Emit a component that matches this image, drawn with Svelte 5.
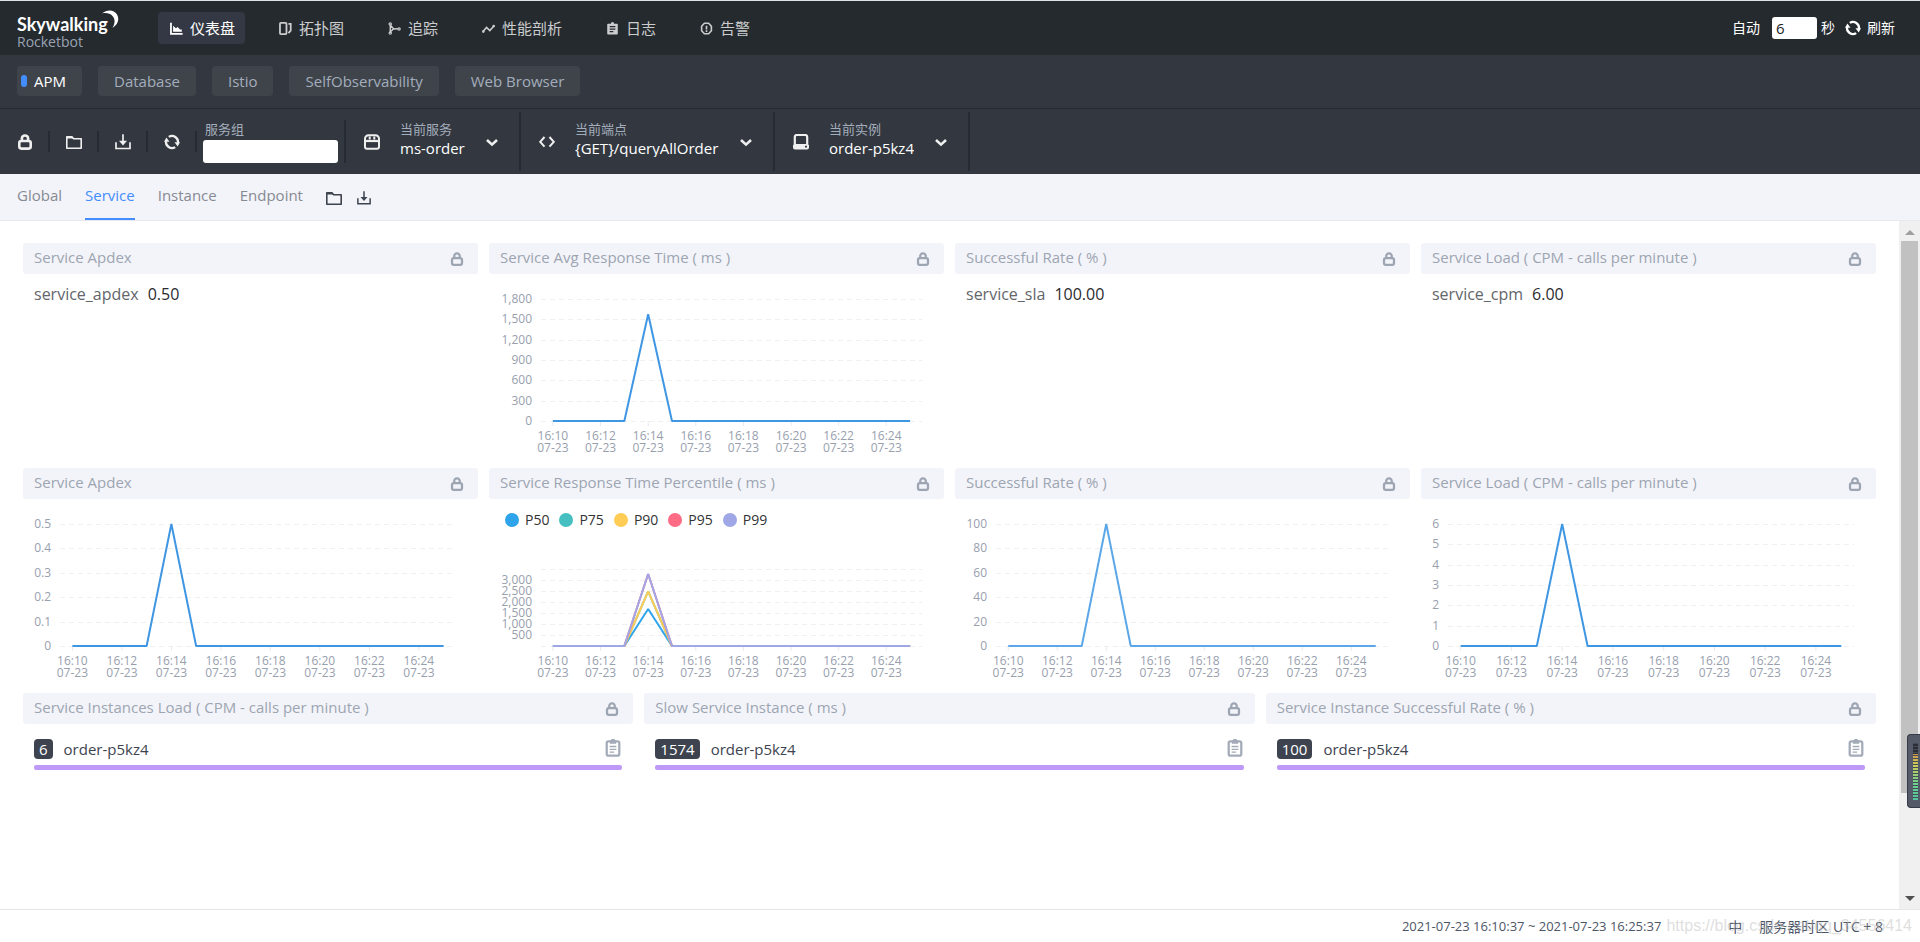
<script lang="ts">
  interface Line {
    color: string;
    peak: number;
    width: number;
  }

  interface Panel {
    title: string;
    type: "num" | "line" | "slow";
    span: number;
    metric?: string;
    value?: string;
    ticks?: string[];
    max?: number;
    left?: number;
    top?: number;
    lines?: Line[];
    legend?: boolean;
    w: number;
  }

  const navs = [
    { icon: "chart", label: "仪表盘" },
    { icon: "topo", label: "拓扑图" },
    { icon: "trace", label: "追踪" },
    { icon: "profile", label: "性能剖析" },
    { icon: "log", label: "日志" },
    { icon: "alarm", label: "告警" },
  ];
  const groups = ["APM", "Database", "Istio", "SelfObservability", "Web Browser"];
  const tabs = ["Global", "Service", "Instance", "Endpoint"];
  const tools = [
    { icon: "lock", label: "锁定" },
    { icon: "folder", label: "导入" },
    { icon: "download", label: "导出" },
    { icon: "refresh", label: "刷新" },
  ];
  const pickers = [
    { icon: "service", label: "当前服务", value: "ms-order" },
    { icon: "code", label: "当前端点", value: "{GET}/queryAllOrder" },
    { icon: "disk", label: "当前实例", value: "order-p5kz4" },
  ];
  const times = ["16:10", "16:12", "16:14", "16:16", "16:18", "16:20", "16:22", "16:24"];

  const blue = "#3f96e3";
  const legend = [
    { name: "P50", color: "#30a4eb" },
    { name: "P75", color: "#45bfc0" },
    { name: "P90", color: "#ffcc55" },
    { name: "P95", color: "#ff6a84" },
    { name: "P99", color: "#a0a7e6" },
  ];

  let panels: Panel[] = [
    { title: "Service Apdex", type: "num", span: 3, metric: "service_apdex", value: "0.50", w: 0 },
    {
      title: "Service Avg Response Time ( ms )",
      type: "line",
      span: 3,
      ticks: ["0", "300", "600", "900", "1,200", "1,500", "1,800"],
      max: 1800,
      left: 52,
      top: 25,
      lines: [{ color: blue, peak: 1574, width: 2 }],
      w: 455,
    },
    { title: "Successful Rate ( % )", type: "num", span: 3, metric: "service_sla", value: "100.00", w: 0 },
    { title: "Service Load ( CPM - calls per minute )", type: "num", span: 3, metric: "service_cpm", value: "6.00", w: 0 },
    {
      title: "Service Apdex",
      type: "line",
      span: 3,
      ticks: ["0", "0.1", "0.2", "0.3", "0.4", "0.5"],
      max: 0.5,
      left: 37,
      top: 25,
      lines: [{ color: blue, peak: 0.5, width: 2 }],
      w: 455,
    },
    {
      title: "Service Response Time Percentile ( ms )",
      type: "line",
      span: 3,
      ticks: ["", "500", "1,000", "1,500", "2,000", "2,500", "3,000", ""],
      max: 3500,
      left: 52,
      top: 70,
      legend: true,
      lines: [
        { color: "#30a4eb", peak: 1680, width: 2 },
        { color: "#45bfc0", peak: 2480, width: 2 },
        { color: "#ffcc55", peak: 2480, width: 2 },
        { color: "#ff6a84", peak: 3270, width: 2 },
        { color: "#a0a7e6", peak: 3270, width: 2 },
      ],
      w: 455,
    },
    {
      title: "Successful Rate ( % )",
      type: "line",
      span: 3,
      ticks: ["0", "20", "40", "60", "80", "100"],
      max: 100,
      left: 41,
      top: 25,
      lines: [{ color: "#5ba7e8", peak: 100, width: 2 }],
      w: 455,
    },
    {
      title: "Service Load ( CPM - calls per minute )",
      type: "line",
      span: 3,
      ticks: ["0", "1", "2", "3", "4", "5", "6"],
      max: 6,
      left: 27,
      top: 25,
      lines: [{ color: blue, peak: 6, width: 2 }],
      w: 455,
    },
    { title: "Service Instances Load ( CPM - calls per minute )", type: "slow", span: 4, metric: "order-p5kz4", value: "6", w: 0 },
    { title: "Slow Service Instance ( ms )", type: "slow", span: 4, metric: "order-p5kz4", value: "1574", w: 0 },
    { title: "Service Instance Successful Rate ( % )", type: "slow", span: 4, metric: "order-p5kz4", value: "100", w: 0 },
  ];

  let activeNav = 0;
  let activeGroup = 0;
  let activeTab = 1;
  let interval = "6";
  let serviceGroup = "";

  const BOTTOM = 147;
  const RIGHT = 22;

  // centre of the nth of the sixteen one-minute bands
  function px(p: Panel, i: number) {
    return p.left + ((p.w - RIGHT - p.left) / 16) * (i + 0.5);
  }

  function py(p: Panel, v: number) {
    return BOTTOM - ((BOTTOM - p.top) * v) / p.max;
  }

  function points(p: Panel, line: Line) {
    return Array.from({ length: 16 }, (_, i) => `${px(p, i)},${py(p, i === 4 ? line.peak : 0)}`).join(" ");
  }

  function gridY(p: Panel, i: number) {
    return Math.round(BOTTOM - ((BOTTOM - p.top) * i) / (p.ticks.length - 1)) + 0.5;
  }
</script>

{#snippet icon(name, size = 16)}
  <svg class="icon" width={size} height={size} viewBox="0 0 16 16" fill="none" stroke="currentColor" stroke-width="2" aria-hidden="true">
    {#if name === "chart"}
      <path d="M1.2 1v13.5H15.500" stroke-width="2.200" />
      <path d="M3.800 12V4.600l3.400 3 2.300-1.500 2.700 3h2.300V12z" fill="currentColor" stroke="none" />
    {:else if name === "topo"}
      <rect x="1.2" y="1.2" width="8" height="13.6" rx="1" stroke-width="2.200" />
      <path d="M11.600 2.400h2.800v8.200l-2.800 3" stroke-width="2.200" />
    {:else if name === "trace"}
      <path d="M2.8 3v10.5M3 12l3.6-3.4L12 8.4M3.2 4.4l3.6 4" stroke-width="1.800" />
      <circle cx="2.8" cy="2.4" r="1.4" stroke-width="1.500" />
      <circle cx="2.8" cy="13.6" r="1.4" stroke-width="1.500" />
      <circle cx="13.6" cy="8.6" r="1.4" stroke-width="1.500" />
    {:else if name === "profile"}
      <path d="M1 12l4.6-5.4 4 4L15 4.6" stroke-width="2" />
      <circle cx="1.6" cy="11.8" r="1.600" fill="currentColor" stroke="none" />
      <circle cx="14.4" cy="5" r="1.600" fill="currentColor" stroke="none" />
    {:else if name === "log"}
      <path d="M2.5 2H6a2 2 0 0 1 4 0h3.500a1 1 0 0 1 1 1v11.500a1 1 0 0 1-1 1h-11a1 1 0 0 1-1-1V3a1 1 0 0 1 1-1z M4.500 5v1.500h7V5z M4.500 8v1.500h7V8z M4.500 11v1.500h4.500V11z" fill="currentColor" fill-rule="evenodd" stroke="none" />
    {:else if name === "alarm"}
      <path d="M5.400 1.500h5.200l3.400 3.800v5.400l-3.400 3.800H5.400L2 10.700V5.300z" />
      <path d="M8 4.500v4.600M8 10.200v2" />
    {:else if name === "lock"}
      <rect x="2.300" y="7" width="11.400" height="7.600" rx="2" stroke-width="2.600" />
      <path d="M4.900 7V4.400A3 3 0 0 1 8 1.500a3 3 0 0 1 3.100 2.900V7" stroke-width="2.600" />
    {:else if name === "folder"}
      <path d="M.8 14.200V2.800h5l1.800 1.900h7.600v9.500z" stroke-width="1.600" stroke-linejoin="round" />
      <path d="M1 2.200h5.200l1.800 2.400H1z" fill="currentColor" stroke="none" />
    {:else if name === "download"}
      <path d="M1 8.200v6.300h14V8.200" stroke-width="1.700" />
      <path d="M8 .3v9.500" stroke-width="1.700" />
      <path d="M4 6.800h8L8 11.400z" fill="currentColor" stroke="none" />
    {:else if name === "refresh"}
      <path d="M4.800 2.900A6 6 0 0 1 13.900 9" stroke-width="2.300" />
      <path d="M11.200 13.100A6 6 0 0 1 2.100 7" stroke-width="2.300" />
      <path d="M10.500 8.200h5.500l-2.300 4.300z" fill="currentColor" stroke="none" />
      <path d="M0 7.800h5.500L2.400 3.500z" fill="currentColor" stroke="none" />
    {:else if name === "service"}
      <path d="M4.600 1.200h6.800A3.600 3.600 0 0 1 15 4.800v8a2 2 0 0 1-2 2H3a2 2 0 0 1-2-2v-8a3.600 3.600 0 0 1 3.600-3.600z" />
      <path d="M1 7h14" stroke-width="2.200" />
      <path d="M5.700 2.500v3M10.300 2.500v3" stroke-width="2" />
    {:else if name === "code"}
      <path d="M5.500 3L1.200 7.800l4.300 4.800M10.500 3l4.300 4.800-4.300 4.800" />
    {:else if name === "disk"}
      <path d="M1.800 10V3a2 2 0 0 1 2-2h8.400a2 2 0 0 1 2 2v7" stroke-width="2.200" />
      <path d="M1.500 10h13a1.500 1.500 0 0 1 1.500 1.500v2a2 2 0 0 1-2 2H2a2 2 0 0 1-2-2v-2A1.500 1.500 0 0 1 1.500 10z M12 11.800v1.800h2v-1.800z" fill="currentColor" fill-rule="evenodd" stroke="none" />
    {:else if name === "clipboard"}
      <rect x="2.400" y="2.200" width="11.200" height="12.600" rx="1.500" stroke-width="2" />
      <path d="M5.200 1h1.200a1.600 1.600 0 0 1 3.200 0h1.200v3.200H5.200z" fill="currentColor" stroke="none" />
      <path d="M5 6.700h6M5 9.200h6M5 11.700h4" stroke-width="1.200" />
    {:else if name === "chevron"}
      <path d="M3 6l5 4.600L13 6" stroke-width="2.600" />
    {/if}
  </svg>
{/snippet}

<div class="page">
  <header class="top">
    <div class="logo">
      <span class="logo-name">Skywalking</span>
      <span class="logo-sub">Rocketbot</span>
      <svg class="moon" width="18" height="20" viewBox="0 0 18 20" aria-hidden="true">
        <path d="M1 3.500C6-1 13-.5 16 4.500c3 5 .5 10-4.500 13.500 2.500-4.500 3-8.500 0-12C9 3.200 5 2.600 1 3.500z" fill="#fff" />
      </svg>
    </div>
    <nav class="navs">
      {#each navs as nav, i}
        <a href="#{nav.icon}" class="nav" class:active={activeNav === i} on:click={() => (activeNav = i)}>
          {@render icon(nav.icon, 13)}
          <span>{nav.label}</span>
        </a>
      {/each}
    </nav>
    <div class="auto">
      <label for="interval">自动</label>
      <input id="interval" type="text" bind:value={interval} />
      <span class="unit">秒</span>
      <button class="reload">
        {@render icon("refresh", 16)}
        <span>刷新</span>
      </button>
    </div>
  </header>

  <div class="groups">
    {#each groups as group, i}
      <button class="group" class:active={activeGroup === i} on:click={() => (activeGroup = i)}>{group}</button>
    {/each}
  </div>

  <div class="toolbar">
    {#each tools as tool}
      <button class="tool" aria-label={tool.label}>{@render icon(tool.icon, 16)}</button>
    {/each}
    <div class="service-group">
      <label for="service-group">服务组</label>
      <input id="service-group" type="text" bind:value={serviceGroup} />
    </div>
    {#each pickers as picker, i}
      <div class="picker">
        {@render icon(picker.icon, 16)}
        <div class="picker-text">
          <label for="picker-{i}">{picker.label}</label>
          <select id="picker-{i}">
            <option>{picker.value}</option>
          </select>
        </div>
        {@render icon("chevron", 16)}
      </div>
    {/each}
  </div>

  <div class="tabs">
    {#each tabs as tab, i}
      <button class="tab" class:active={activeTab === i} on:click={() => (activeTab = i)}>{tab}</button>
    {/each}
    <div class="tab-tools">
      <button aria-label="导入">{@render icon("folder", 16)}</button>
      <button aria-label="导出">{@render icon("download", 14)}</button>
    </div>
  </div>

  <div class="body">
    <main class="board">
      {#each panels as panel}
        <section class="panel" class:third={panel.span === 4}>
          <h2 class="panel-head">
            <span>{panel.title}</span>
            {@render icon("lock", 14)}
          </h2>
          {#if panel.type === "num"}
            <p class="num"><span>{panel.metric}</span><b>{panel.value}</b></p>
          {:else if panel.type === "line"}
            <div class="chart" bind:clientWidth={panel.w}>
              <svg width="100%" height="183" role="img" aria-label={panel.title}>
                {#each panel.ticks as tick, i}
                  <line class="grid" x1={panel.left} x2={panel.w - RIGHT} y1={gridY(panel, i)} y2={gridY(panel, i)} />
                  <text class="axis" x={panel.left - 9} y={gridY(panel, i) + 3} text-anchor="end">{tick}</text>
                {/each}
                {#each times as time, i}
                  <line class="tick" x1={px(panel, i * 2)} x2={px(panel, i * 2)} y1={BOTTOM} y2={BOTTOM + 5} />
                  <text class="axis" x={px(panel, i * 2)} y="166" text-anchor="middle">{time}</text>
                  <text class="axis" x={px(panel, i * 2)} y="178" text-anchor="middle">07-23</text>
                {/each}
                {#each panel.lines as line}
                  <polyline points={points(panel, line)} fill="none" stroke={line.color} stroke-width={line.width} stroke-linejoin="bevel" />
                {/each}
              </svg>
              {#if panel.legend}
                <ul class="legend">
                  {#each legend as item}
                    <li><i style="background: {item.color}"></i>{item.name}</li>
                  {/each}
                </ul>
              {/if}
            </div>
          {:else}
            <div class="slow">
              <div class="slow-row">
                <span class="badge">{panel.value}</span>
                <span class="slow-name">{panel.metric}</span>
                <button aria-label="复制">{@render icon("clipboard", 18)}</button>
              </div>
              <div class="bar"></div>
            </div>
          {/if}
        </section>
      {/each}
    </main>
    <div class="scrollbar" aria-hidden="true">
      <i class="arrow up"></i>
      <div class="track"><div class="thumb"></div></div>
      <i class="arrow down"></i>
    </div>
    <div class="meter" aria-hidden="true"><i></i></div>
  </div>

  <footer class="foot">
    <span class="range">2021-07-23 16:10:37 ~ 2021-07-23 16:25:37</span>
    <span class="lang">中</span>
    <span>服务器时区 UTC + 8</span>
    <span class="mark">https://blog.csdn.net/qq_34556414</span>
  </footer>
</div>

<style>
  :global(body) {
    margin: 0;
    background: #fff;
  }

  .page {
    display: flex;
    flex-direction: column;
    min-height: 100vh;
    box-sizing: border-box;
    border-top: 1px solid #dfe3e4;
    font-family: "Open Sans", "Noto Sans CJK SC", sans-serif;
    font-size: 15px;
    color: #3d444f;
  }

  button,
  input,
  select {
    font: inherit;
    color: inherit;
  }

  button {
    padding: 0;
    border: 0;
    background: none;
    cursor: pointer;
  }

  .icon {
    display: block;
    flex: none;
  }

  .top {
    display: flex;
    align-items: center;
    height: 54px;
    padding: 0 25px 0 17px;
    background: #252a2f;
    color: #cacccd;
  }

  .logo {
    position: relative;
    display: flex;
    flex-direction: column;
    width: 141px;
    padding-top: 8px;
  }

  .logo-name {
    font-family: Lato, sans-serif;
    font-size: 18px;
    font-weight: 700;
    line-height: 19px;
    color: #fff;
  }

  .logo-sub {
    font-size: 14px;
    line-height: 16px;
    color: #9aa3b2;
  }

  .moon {
    position: absolute;
    left: 84px;
    top: 3px;
  }

  .navs {
    display: flex;
    gap: 22px;
  }

  .nav {
    display: flex;
    align-items: center;
    gap: 7px;
    height: 32px;
    padding: 0 10px 0 12px;
    box-sizing: border-box;
    border-radius: 4px;
    color: inherit;
    text-decoration: none;
  }

  .nav span,
  .auto label,
  .auto span {
    padding-bottom: 2px;
  }

  .nav.active {
    background: #333844;
    color: #fff;
  }

  .auto {
    display: flex;
    align-items: center;
    margin-left: auto;
    font-size: 14px;
    color: #fff;
  }

  .auto input {
    width: 45px;
    height: 22px;
    margin: 0 4px 0 12px;
    padding: 0 4px;
    box-sizing: border-box;
    border: 0;
    border-radius: 3px;
    font-size: 15px;
    color: #222;
  }

  .unit {
    margin-right: 10px;
  }

  .reload {
    display: flex;
    align-items: center;
    gap: 6px;
  }

  .groups {
    display: flex;
    gap: 16px;
    padding: 11px 17px 12px;
    border-bottom: 1px solid #252a2f;
    background: #333840;
  }

  .group {
    height: 30px;
    padding: 0 16px;
    border-radius: 4px;
    background: #3f444b;
    color: #a3adbb;
  }

  .group.active {
    display: flex;
    align-items: center;
    gap: 7px;
    padding: 0 16px 0 4px;
    color: #fff;
  }

  .group.active::before {
    content: "";
    width: 6px;
    height: 12px;
    border-radius: 3px;
    background: #448dfe;
  }

  .toolbar {
    display: flex;
    align-items: center;
    height: 65px;
    padding-left: 17px;
    background: #333840;
    color: #efefef;
  }

  .tool {
    display: flex;
    align-items: center;
    height: 21px;
    padding: 0 15px 0 16px;
    border-right: 2px solid #272b31;
  }

  .tool:first-child {
    padding-left: 0;
  }

  .service-group {
    display: flex;
    flex-direction: column;
    padding: 0 6px;
    border-right: 2px solid #272b31;
  }

  .service-group label,
  .picker label {
    font-size: 13px;
    line-height: 18px;
    color: #a3adbb;
  }

  .service-group label {
    padding: 0 2px 2px;
  }

  .service-group input {
    width: 135px;
    height: 23px;
    box-sizing: border-box;
    border: 0;
    border-radius: 3px;
    color: #222;
  }

  .picker {
    display: flex;
    align-items: center;
    height: 59px;
    padding: 0 19px 0 18px;
    border-right: 2px solid #272b31;
  }

  .picker-text {
    display: flex;
    flex-direction: column;
    margin: 0 19px 0 20px;
    padding-bottom: 6px;
  }

  .picker select {
    height: 20px;
    padding: 0;
    border: 0;
    appearance: none;
    background: none;
    line-height: 18px;
    color: #fff;
  }

  .picker option {
    color: #222;
  }

  .tabs {
    display: flex;
    gap: 23px;
    height: 46px;
    padding-left: 17px;
    border-bottom: 1px solid #e7e9ee;
    background: #f3f4f9;
    color: #868a93;
  }

  .tab {
    padding-bottom: 2px;
    border-bottom: 2px solid transparent;
  }

  .tab.active {
    border-color: #448dfe;
    color: #448dfe;
  }

  .tab-tools {
    display: flex;
    align-items: center;
    gap: 15px;
    padding-top: 2px;
    color: #3d444f;
  }

  .body {
    position: relative;
    display: flex;
    flex: 1;
  }

  .board {
    display: grid;
    flex: 1;
    grid-template-columns: repeat(12, minmax(0, 1fr));
    grid-auto-rows: 214px;
    align-content: start;
    gap: 11px;
    padding: 22px 23px 0 23px;
  }

  .panel {
    grid-column: span 3;
  }

  .panel.third {
    grid-column: span 4;
  }

  .panel-head {
    display: flex;
    align-items: center;
    justify-content: space-between;
    height: 31px;
    margin: 0;
    padding: 0 14px 0 11px;
    border-radius: 3px;
    background: #f3f4f9;
    font-size: 15px;
    font-weight: 400;
    color: #9da5b2;
  }

  .panel-head span {
    padding-bottom: 3px;
  }

  .num {
    display: flex;
    gap: 9px;
    margin: 0;
    padding: 9px 11px;
    font-size: 16px;
    line-height: 22px;
    color: #63666b;
  }

  .num b {
    font-weight: 400;
    color: #2b2b2f;
  }

  .chart {
    position: relative;
  }

  .chart svg {
    display: block;
  }

  .axis {
    font-size: 12px;
    fill: #98a0ae;
  }

  .grid {
    stroke: #f0f0f1;
    stroke-dasharray: 5 4;
  }

  .tick {
    stroke: #e8eaee;
  }

  .legend {
    position: absolute;
    left: 16px;
    top: 13px;
    display: flex;
    gap: 10px;
    margin: 0;
    padding: 0;
    list-style: none;
    font-size: 14px;
    line-height: 16px;
    color: #333;
  }

  .legend li {
    display: flex;
    align-items: center;
    gap: 6px;
  }

  .legend i {
    width: 14px;
    height: 14px;
    border-radius: 50%;
  }

  .slow {
    padding: 14px 11px 0;
  }

  .slow-row {
    display: flex;
    align-items: center;
    gap: 11px;
    height: 21px;
    margin-bottom: 6px;
  }

  .badge {
    padding: 0 5px;
    border-radius: 4px;
    background: #3d444f;
    line-height: 20px;
    color: #fff;
  }

  .slow-row button {
    margin-left: auto;
    padding-bottom: 2px;
    color: #a3abb8;
  }

  .bar {
    height: 5px;
    border-radius: 2px;
    background: #bf99f8;
  }

  .scrollbar {
    display: flex;
    flex-direction: column;
    align-items: center;
    justify-content: space-between;
    width: 21px;
    box-sizing: border-box;
    padding: 9px 0 8px;
    background: #f0f0f0;
  }

  .arrow {
    border: 5px solid transparent;
  }

  .arrow.up {
    margin-top: -5px;
    border-bottom-color: #a0a0a0;
  }

  .arrow.down {
    margin-bottom: -5px;
    border-top-color: #505050;
  }

  .track {
    flex: 1;
    width: 17px;
    padding: 6px 0;
  }

  .thumb {
    height: 85%;
    background: #c1c1c1;
  }

  .meter {
    position: absolute;
    right: 0;
    bottom: 101px;
    width: 13px;
    height: 74px;
    box-sizing: border-box;
    padding: 8px 2px 7px 5px;
    border: 1px solid #363a46;
    border-right: 0;
    border-radius: 4px 0 0 4px;
    background: #555a69;
  }

  .meter i {
    display: block;
    height: 100%;
    background:
      repeating-linear-gradient(#454a56 0 1px, transparent 1px 3px),
      linear-gradient(#2b2e36 0 20%, #d19a4e 20%, #c9cf5c 40%, #6fd08c 70%, #53c79f);
  }

  .foot {
    position: relative;
    display: flex;
    align-items: center;
    justify-content: flex-end;
    height: 32px;
    padding-right: 37px;
    border-top: 1px solid #e4e6ea;
    font-size: 14px;
    color: #4d5666;
  }

  .range {
    margin-right: 67px;
    font-size: 13px;
  }

  .lang {
    margin-right: 17px;
  }

  .mark {
    position: absolute;
    right: 8px;
    font-family: "Liberation Sans", Arial, sans-serif;
    font-size: 16px;
    color: rgba(190, 190, 190, 0.5);
  }
</style>
